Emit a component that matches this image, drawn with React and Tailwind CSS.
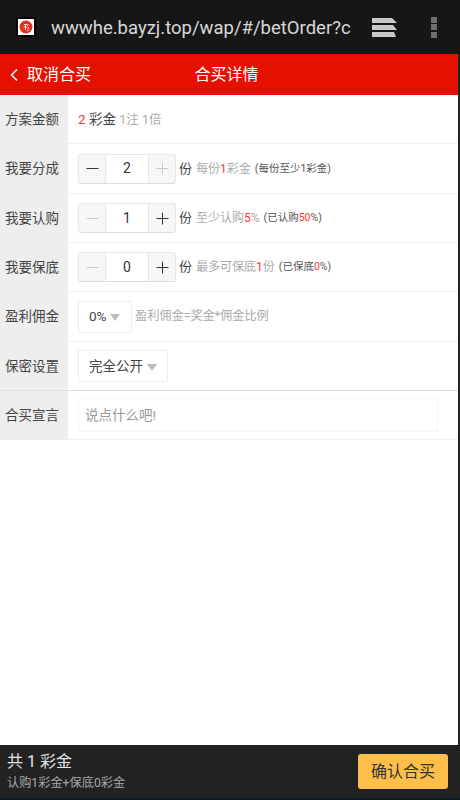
import { ChevronLeft, Minus, Plus } from 'lucide-react';

const font = { fontFamily: 'Roboto, "Noto Sans CJK SC", sans-serif' };

function Row({ label, height, children, borderClass = 'border-[#eeeeee]' }) {
  return (
    <div className={`flex border-b ${borderClass} ${height}`}>
      <div className="w-[68px] shrink-0 bg-[#eeeeee] pl-[5px] flex items-center text-[13.5px] text-[#444]">{label}</div>
      <div className="flex-1 min-w-0 pl-[10px] flex items-center">{children}</div>
    </div>
  );
}

function Stepper({ value, minusOff, plusOff }) {
  return (
    <div className="flex h-[30px] w-[98px] rounded-[3px] border border-[#e8e8e8] border-b-[#dddddd] bg-[#f7f7f7] text-[#333]">
      <div className="w-[26px] flex items-center justify-center">
        <Minus size={19} strokeWidth={1.3} className={minusOff ? 'text-[#c8c8c8]' : 'text-[#333]'} />
      </div>
      <div className="flex-1 bg-white border-x border-[#e8e8e8] flex items-center justify-center text-[14px]">{value}</div>
      <div className="w-[26px] flex items-center justify-center">
        <Plus size={19} strokeWidth={1.3} className={plusOff ? 'text-[#c8c8c8]' : 'text-[#333]'} />
      </div>
    </div>
  );
}

function Caret() {
  return <span className="w-0 h-0 border-x-[5.5px] border-x-transparent border-t-[7px] border-t-[#b9bcc4] mt-[2px]" />;
}

export default function App() {
  return (
    <div className="h-[800px] w-[460px] flex flex-col bg-white overflow-hidden" style={font}>
      {/* browser bar */}
      <div className="h-[54px] shrink-0 bg-[#161616] flex items-center pl-[16px]">
        <div className="w-[20px] h-[20px] bg-white border-2 border-black flex items-center justify-center shrink-0">
          <svg viewBox="0 0 14 14" className="w-[14px] h-[14px]">
            <circle cx="7" cy="7" r="6.5" fill="#e0301e" />
            <path d="M5 4.5h3M4.5 7h4M6.5 4v6M9.5 4l-1 2M10 7l-1.5 2M10 9.5l-2 1.5" stroke="#fff" strokeWidth="0.8" fill="none" />
          </svg>
        </div>
        <div className="ml-[15px] mt-[3px] w-[300px] overflow-hidden whitespace-nowrap text-[18.5px] text-[#d8d8d8]">wwwhe.bayzj.top/wap/#/betOrder?c</div>
        <svg viewBox="0 0 25 19" className="w-[25px] h-[19px] ml-[21px] shrink-0">
          <path d="M0 0H20L25 5H0Z M0 7H21L25 12H0Z M0 14H22L24 19H0Z" fill="#c9c9c9" />
        </svg>
        <div className="ml-[34px] flex flex-col gap-[1.5px] shrink-0">
          <span className="w-[6px] h-[6px] bg-[#6f6f6f]" />
          <span className="w-[6px] h-[6px] bg-[#6f6f6f]" />
          <span className="w-[6px] h-[6px] bg-[#6f6f6f]" />
        </div>
      </div>

      <div className="flex-1 min-h-0 flex">
        <div className="flex-1 min-w-0 flex flex-col">
          {/* title bar */}
          <div className="h-[41px] shrink-0 bg-[#e61000] relative flex items-center justify-center text-white text-[16px]">
            <div className="absolute left-[4px] top-0 h-full flex items-center gap-[3px]">
              <ChevronLeft size={20} strokeWidth={2} />
              <span>取消合买</span>
            </div>
            <span className="mr-[5px]">合买详情</span>
          </div>

          <Row label="方案金额" height="h-[49px]">
            <span className="text-[13.5px] text-[#444]">
              <span className="text-[#f33]">2</span> 彩金 <span className="text-[12.5px] text-[#aaa]">1注 1倍</span>
            </span>
          </Row>
          <Row label="我要分成" height="h-[50px]">
            <Stepper value="2" plusOff />
            <span className="ml-[3px] text-[13px] text-[#444]">份</span>
            <span className="ml-[4px] text-[12px] text-[#aaa]">每份<span className="text-[#f33]">1</span>彩金</span>
            <span className="ml-[4px] text-[10.5px] text-[#555]">(每份至少1彩金)</span>
          </Row>
          <Row label="我要认购" height="h-[49px]">
            <Stepper value="1" minusOff />
            <span className="ml-[3px] text-[13px] text-[#444]">份</span>
            <span className="ml-[4px] text-[12px] text-[#aaa]">至少认购<span className="text-[#f33]">5</span>%</span>
            <span className="ml-[4px] text-[10.5px] text-[#555]">(已认购<span className="text-[#f33]">50</span>%)</span>
          </Row>
          <Row label="我要保底" height="h-[49px]">
            <Stepper value="0" minusOff />
            <span className="ml-[3px] text-[13px] text-[#444]">份</span>
            <span className="ml-[4px] text-[12px] text-[#aaa]">最多可保底<span className="text-[#f33]">1</span>份</span>
            <span className="ml-[4px] text-[10.5px] text-[#555]">(已保底<span className="text-[#f33]">0</span>%)</span>
          </Row>
          <Row label="盈利佣金" height="h-[50px]">
            <div className="h-[32px] w-[54px] border border-[#eeeeee] flex items-center pl-[10px] gap-[4px] text-[13.5px] text-[#444]">
              0%<Caret />
            </div>
            <span className="ml-[3px] text-[12.2px] text-[#aaa]">盈利佣金=奖金*佣金比例</span>
          </Row>
          <Row label="保密设置" height="h-[49px]" borderClass="border-[#dddddd]">
            <div className="h-[32px] w-[90px] border border-[#eeeeee] flex items-center pl-[10px] gap-[4px] text-[13.5px] text-[#444]">
              完全公开<Caret />
            </div>
          </Row>
          <Row label="合买宣言" height="h-[49px]">
            <div className="h-[34px] w-[360px] border border-[#f5f5f5] flex items-center pl-[6px] text-[13.5px] text-[#999]">说点什么吧!</div>
          </Row>

          <div className="flex-1" />

          {/* footer */}
          <div className="h-[53px] shrink-0 bg-[#222222] flex items-center justify-between pl-[7px] pr-[10px]">
            <div className="flex flex-col gap-[3px] mt-[-1px]">
              <span className="text-[16px] leading-[20px] text-[#e4e4e4]">共 1 彩金</span>
              <span className="text-[12.2px] leading-[16px] text-[#a8a8a8]">认购1彩金+保底0彩金</span>
            </div>
            <button className="w-[90px] h-[35px] rounded-[3px] bg-[#fdbf4a] text-[16px] text-[#333]">确认合买</button>
          </div>
        </div>
        <div className="w-[2px] bg-[#222222] shrink-0" />
      </div>
      <div className="h-[2px] shrink-0 bg-[#0d1a24]" />
    </div>
  );
}
